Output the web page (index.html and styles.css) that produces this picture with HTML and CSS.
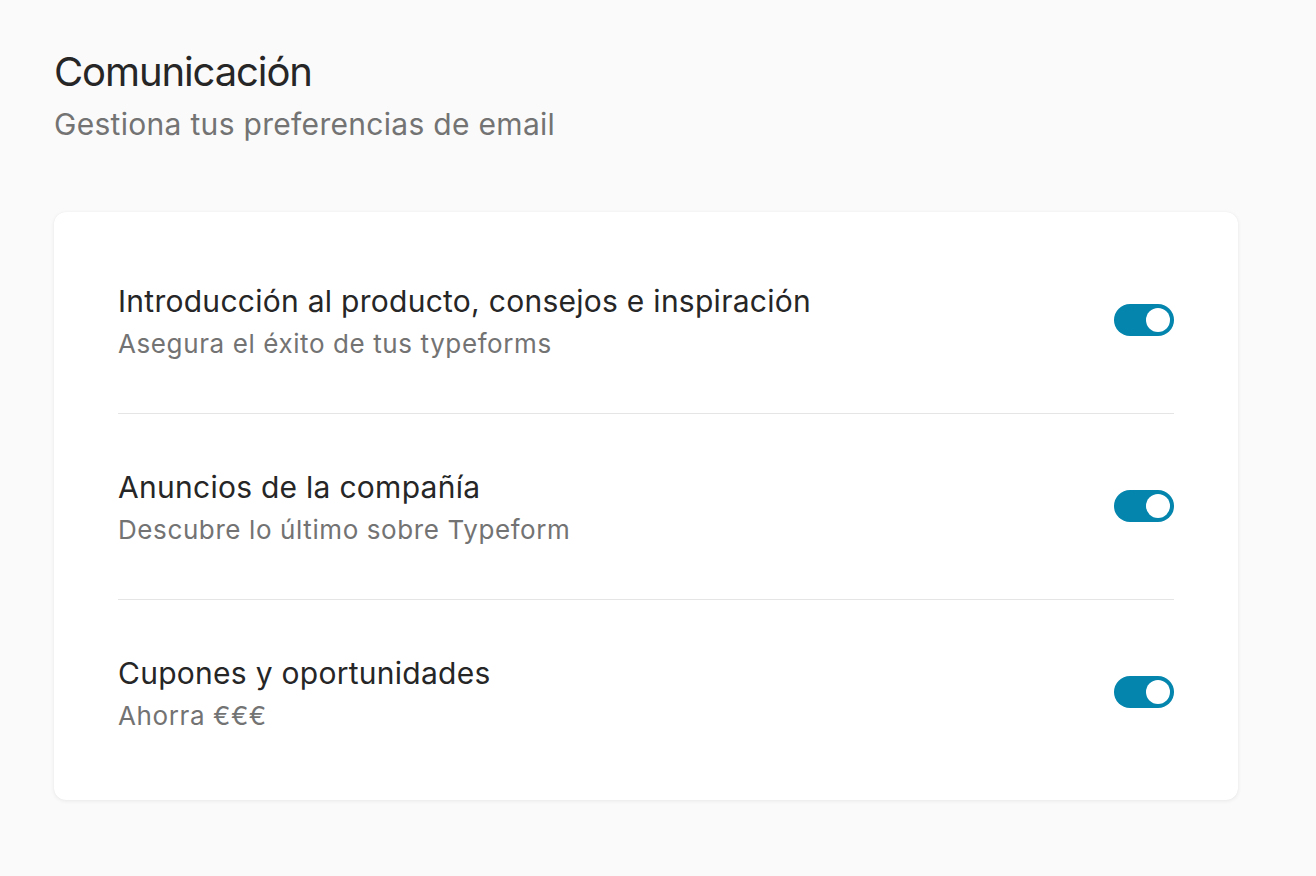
FILE: index.html
```html
<!DOCTYPE html>
<html lang="es">
<head>
<meta charset="utf-8">
<title>Comunicación</title>
<link rel="stylesheet" href="styles.css">
</head>
<body>
<main class="page">
  <header class="header">
    <h1 class="title">Comunicación</h1>
    <p class="subtitle">Gestiona tus preferencias de email</p>
  </header>
  <section class="card">
    <div class="row">
      <div class="text">
        <div class="row-title">Introducción al producto, consejos e inspiración</div>
        <div class="row-sub">Asegura el éxito de tus typeforms</div>
      </div>
      <span class="toggle on" role="switch" aria-checked="true"><span class="knob"></span></span>
    </div>
    <div class="row">
      <div class="text">
        <div class="row-title">Anuncios de la compañía</div>
        <div class="row-sub">Descubre lo último sobre Typeform</div>
      </div>
      <span class="toggle on" role="switch" aria-checked="true"><span class="knob"></span></span>
    </div>
    <div class="row">
      <div class="text">
        <div class="row-title">Cupones y oportunidades</div>
        <div class="row-sub">Ahorra €€€</div>
      </div>
      <span class="toggle on" role="switch" aria-checked="true"><span class="knob"></span></span>
    </div>
  </section>
</main>
</body>
</html>
```

FILE: styles.css
```css
* { box-sizing: border-box; }
html, body { margin: 0; padding: 0; }
body {
  background: #fafafa;
  font-family: Inter, "Noto Sans", "Liberation Sans", sans-serif;
  color: #262627;
  width: 1316px;
  height: 876px;
  overflow: hidden;
}
.page {
  padding: 48px 78px 0 54px;
}
.header { margin-bottom: 68px; }
.title {
  margin: 0;
  font-size: 40px;
  line-height: 48px;
  font-weight: 400;
  color: #262627;
  letter-spacing: -1.1px;
}
.subtitle {
  margin: 8px 0 0;
  font-size: 30px;
  line-height: 40px;
  color: #737373;
  font-weight: 400;
  letter-spacing: 0.3px;
}
.card {
  background: #fff;
  border-radius: 12px;
  box-shadow: 0 1px 4px rgba(0,0,0,0.07), 0 0 1px rgba(0,0,0,0.06);
  padding: 16px 64px 15px;
  width: 1184px;
}
.row {
  display: flex;
  align-items: center;
  justify-content: space-between;
  padding: 53px 0 51px;
  border-bottom: 1px solid #e5e5e5;
}
.row:last-child { border-bottom: none; }
.row-title {
  font-size: 30px;
  line-height: 40px;
  color: #262627;
  letter-spacing: 0.27px;
}
.row-sub {
  margin-top: 5px;
  font-size: 26px;
  line-height: 36px;
  color: #737373;
  letter-spacing: 0.6px;
}
.toggle {
  position: relative;
  display: inline-block;
  width: 60px;
  height: 32px;
  border-radius: 16px;
  background: #0385ad;
  flex: none;
  margin-bottom: 3px;
}
.knob {
  position: absolute;
  top: 4px;
  right: 4px;
  width: 24px;
  height: 24px;
  border-radius: 50%;
  background: #fff;
}
```
